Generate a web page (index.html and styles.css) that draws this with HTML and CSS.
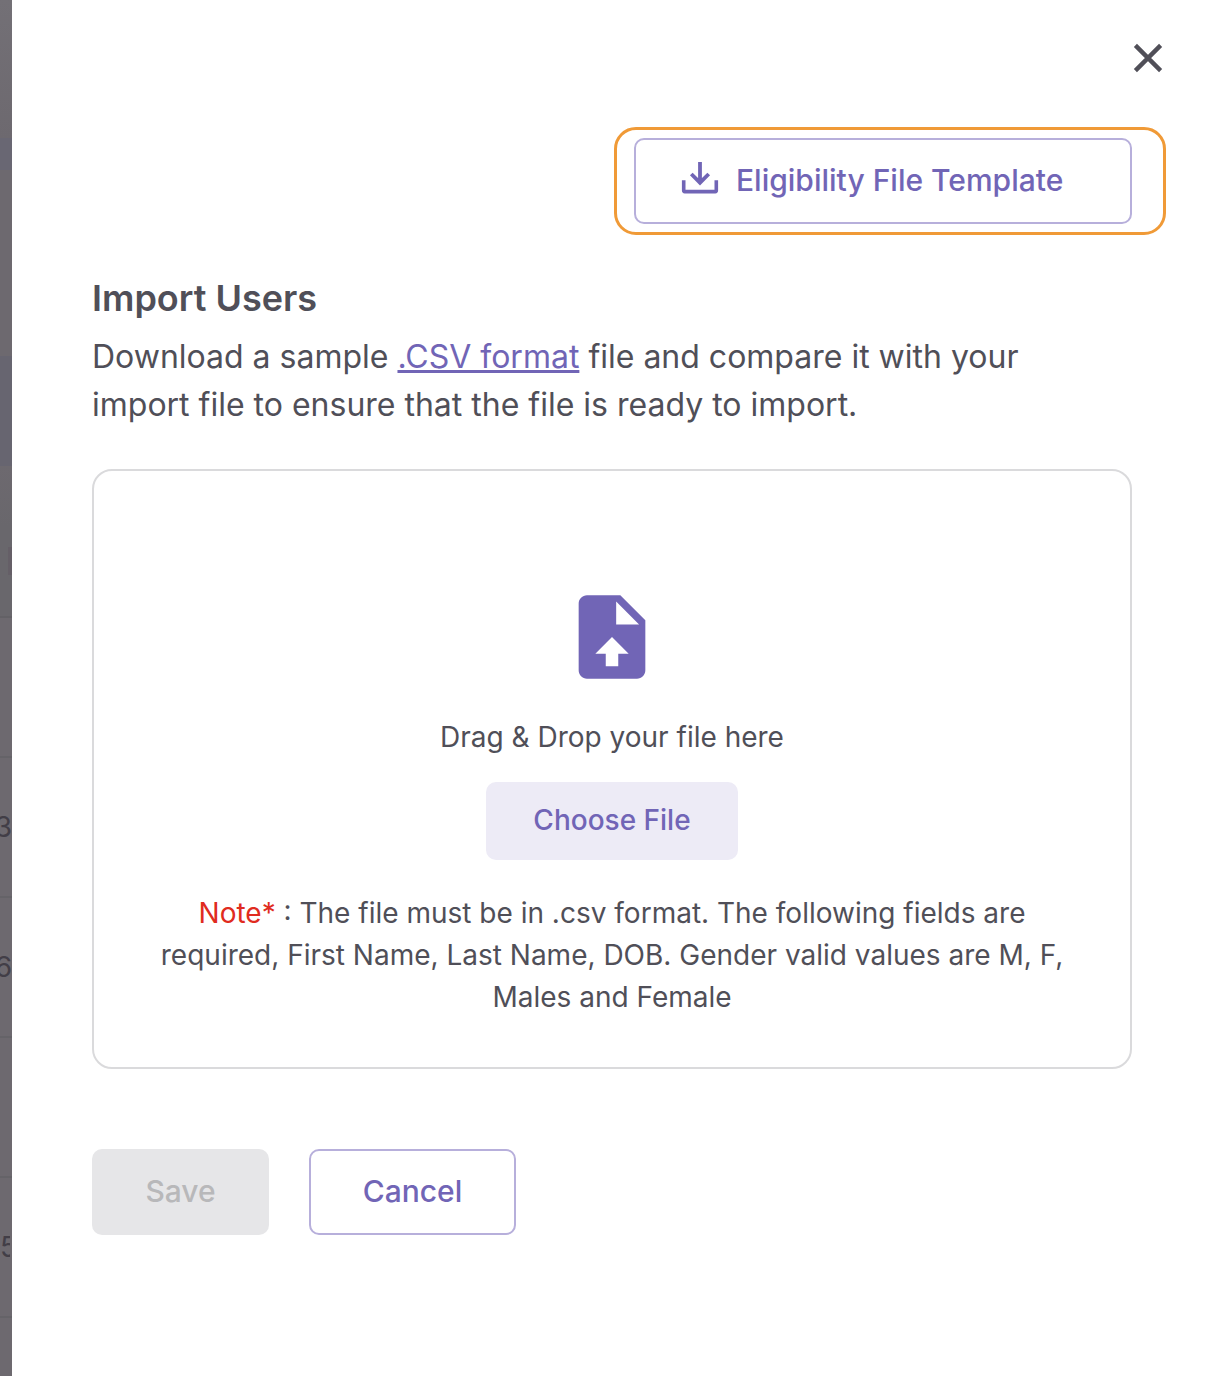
FILE: index.html
```html
<!DOCTYPE html>
<html lang="en">
<head>
    <meta charset="UTF-8">
    <title>Import Users</title>
    <link rel="stylesheet" href="styles.css">
</head>
<body>
    <div class="page">
        <div class="backdrop">
            <div class="band band-top"></div>
            <div class="band band-nav"></div>
            <div class="band band-title"></div>
            <div class="band band-filter"></div>
            <div class="band band-head"><span class="column-mark"></span></div>
            <div class="row"></div>
            <div class="row"><span class="cell">3</span></div>
            <div class="row"><span class="cell">6</span></div>
            <div class="row"></div>
            <div class="row"><span class="cell cell-start">5</span></div>
            <div class="row row-last"></div>
        </div>

        <main class="panel">
            <div class="panel-top">
                <button class="close" type="button" aria-label="Close">
                    <svg width="32" height="32" viewBox="0 0 32 32" fill="none" stroke="currentColor" stroke-width="4.4">
                        <path d="M3.4 3.4L28.6 28.6M28.6 3.4L3.4 28.6"/>
                    </svg>
                </button>
            </div>

            <div class="highlight">
                <button class="btn btn-outline btn-template" type="button">
                    <svg width="40" height="40" viewBox="0 0 40 40" fill="none" stroke="currentColor">
                        <path d="M3.7 20.2V30.6Q3.7 31.6 4.7 31.6H35.3Q36.3 31.6 36.3 30.6V20.2" stroke-width="3.6"/>
                        <path d="M20 2V22.5M11.3 14L20 22.7L28.7 14" stroke-width="3.8"/>
                    </svg>
                    Eligibility File Template
                </button>
            </div>

            <h1>Import Users</h1>
            <p class="intro">Download a sample <a href="#">.CSV format</a> file and compare it with your<br>import file to ensure that the file is ready to import.</p>

            <div class="dropzone">
                <svg class="file-icon" width="100" height="100" viewBox="0 0 24 24" fill="currentColor">
                    <path fill-rule="evenodd" d="M14 2H6C4.9 2 4 2.9 4 4V20C4 21.1 4.9 22 6 22H18C19.1 22 20 21.1 20 20V8L14 2ZM13.5 19V16H16L12 12L8 16H10.5V19H13.5ZM13 9V3.5L18.5 9H13Z"/>
                </svg>
                <p class="drop-text">Drag &amp; Drop your file here</p>
                <button class="btn btn-soft" type="button">Choose File</button>
                <p class="note"><span class="note-label">Note*</span> : The file must be in .csv format. The following fields are<br>required, First Name, Last Name, DOB. Gender valid values are M, F,<br>Males and Female</p>
            </div>

            <div class="actions">
                <button class="btn btn-save" type="button" disabled>Save</button>
                <button class="btn btn-outline btn-cancel" type="button">Cancel</button>
            </div>
        </main>
    </div>
</body>
</html>
```
FILE: styles.css
```css
* {
    box-sizing: border-box;
}

body {
    margin: 0;
    font-family: Inter, "Liberation Sans", sans-serif;
    font-optical-sizing: none;
    color: #504f58;
    background: #fff;
}

h1, p {
    margin: 0;
}

.page {
    display: grid;
    grid-template-columns: 12px 1fr;
    min-height: 100vh;
}

/* dimmed page behind the panel */
.backdrop {
    display: flex;
    flex-direction: column;
    overflow: hidden;
    background: #6d696f;
}

.band-top {
    height: 138px;
    background: linear-gradient(#737076, #6d696f);
}

.band-nav {
    height: 32px;
    background: #696773;
}

.band-title {
    height: 186px;
}

.band-filter {
    height: 110px;
    background: #676570;
}

.band-head {
    display: flex;
    justify-content: flex-end;
    align-items: center;
    height: 152px;
    padding-top: 40px;
    background: linear-gradient(#6d696f, #69676c 40%);
    border-bottom: 2px solid #636166;
}

.column-mark {
    width: 4px;
    height: 28px;
    background: #655f67;
}

.row {
    display: flex;
    align-items: center;
    height: 140px;
    border-bottom: 2px solid #656368;
}

.row-last {
    flex: 1;
    height: auto;
    border-bottom: 0;
}

.cell {
    display: flex;
    justify-content: flex-end;
    width: 12px;
    overflow: hidden;
    font-size: 28px;
    color: #423e47;
}

.cell-start {
    justify-content: flex-start;
    width: 10px;
}

.panel {
    padding: 40px 80px;
}

.panel-top {
    display: flex;
    justify-content: flex-end;
    margin-right: -34px;
}

.close {
    display: flex;
    padding: 2px;
    border: 0;
    background: none;
    color: #504f58;
    cursor: pointer;
}

.highlight {
    width: fit-content;
    margin: 51px -34px 36px auto;
    padding: 8px 31px 8px 17px;
    border: 3px solid #f09a37;
    border-radius: 22px;
}

.btn {
    display: flex;
    align-items: center;
    justify-content: center;
    height: 86px;
    padding-bottom: 3px;
    border: 2px solid transparent;
    border-radius: 10px;
    font-family: inherit;
    font-size: 30px;
    font-weight: 500;
    color: #7165b6;
    cursor: pointer;
}

.btn-outline {
    background: #fff;
    border-color: #b7afdb;
}

.btn-template {
    justify-content: flex-start;
    gap: 16px;
    min-width: 498px;
    padding-left: 44px;
    padding-right: 44px;
}

.btn-soft {
    width: 252px;
    height: 78px;
    margin: 24px 0 32px;
    background: #edebf6;
    font-size: 28px;
}

.btn-save {
    width: 177px;
    background: #e6e6e8;
    color: #b8b8ba;
    cursor: default;
}

.btn-cancel {
    width: 207px;
}

h1 {
    margin-bottom: 8px;
    font-size: 36px;
    font-weight: 600;
    line-height: 54px;
}

.intro {
    font-size: 32px;
    line-height: 48px;
}

.intro a {
    color: #7165b6;
}

.dropzone {
    display: flex;
    flex-direction: column;
    align-items: center;
    margin: 40px 0 80px;
    padding: 116px 40px 49px;
    border: 2px solid #dadadc;
    border-radius: 20px;
    font-size: 28px;
    line-height: 42px;
    text-align: center;
}

.file-icon {
    margin-bottom: 29px;
    color: #7165b6;
}

.note-label {
    color: #e02b20;
}

.actions {
    display: flex;
    gap: 40px;
}
```
